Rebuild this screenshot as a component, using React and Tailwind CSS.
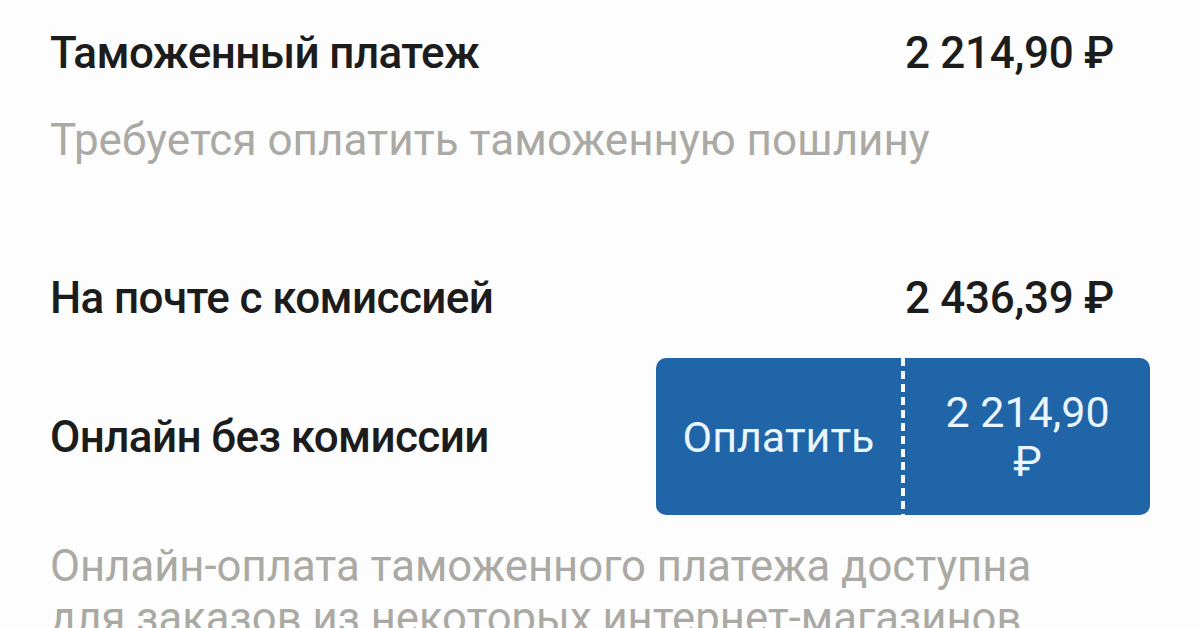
export default function App() {
  const font = { fontFamily: "Roboto, 'Noto Sans', sans-serif" };
  return (
    <div
      className="w-[1200px] h-[628px] overflow-hidden bg-[#fdfdfd] text-[#1c1c1c]"
      style={font}
    >
      <div className="flex flex-col pt-[26px]">
        {/* Customs payment amount */}
        <div className="flex justify-between pl-[50px] pr-[86px] text-[44px] leading-[54px] font-medium">
          <span className="tracking-[-0.6px]">Таможенный платеж</span>
          <span className="tracking-[-0.3px]">2 214,90 ₽</span>
        </div>
        <p className="mt-[33px] pl-[50px] text-[44px] leading-[54px] text-[#aaa9a4]">
          Требуется оплатить таможенную пошлину
        </p>

        {/* Post office option */}
        <div className="mt-[104px] flex justify-between pl-[50px] pr-[86px] text-[44px] leading-[54px] font-medium">
          <span className="tracking-[-0.6px]">На почте с комиссией</span>
          <span className="tracking-[-0.3px]">2 436,39 ₽</span>
        </div>

        {/* Online option with pay button */}
        <div className="mt-[33px] flex items-center justify-between pl-[50px] pr-[50px]">
          <span className="text-[44px] leading-[54px] font-medium tracking-[-0.6px]">
            Онлайн без комиссии
          </span>
          <button className="flex h-[157px] w-[494px] rounded-[10px] bg-[#1f65a8] text-[#eaf5ff]">
            <span className="flex flex-1 items-center justify-center text-[43px] leading-[48px]">
              Оплатить
            </span>
            <span className="w-[4px] self-stretch bg-[repeating-linear-gradient(to_bottom,#f4faff_0_8px,transparent_8px_13px)]" />
            <span className="flex flex-1 items-center justify-center">
              <span className="max-w-[172px] text-center text-[43px] leading-[49px]">
                2 214,90 ₽
              </span>
            </span>
          </button>
        </div>

        <p className="mt-[25px] pl-[50px] text-[45px] leading-[52px] text-[#aaa9a4] whitespace-nowrap">
          <span className="block origin-left scale-x-[0.97]">
            Онлайн-оплата таможенного платежа доступна
          </span>
          <span className="block origin-left scale-x-[0.97]">
            для заказов из некоторых интернет-магазинов.
          </span>
        </p>
      </div>
    </div>
  );
}
